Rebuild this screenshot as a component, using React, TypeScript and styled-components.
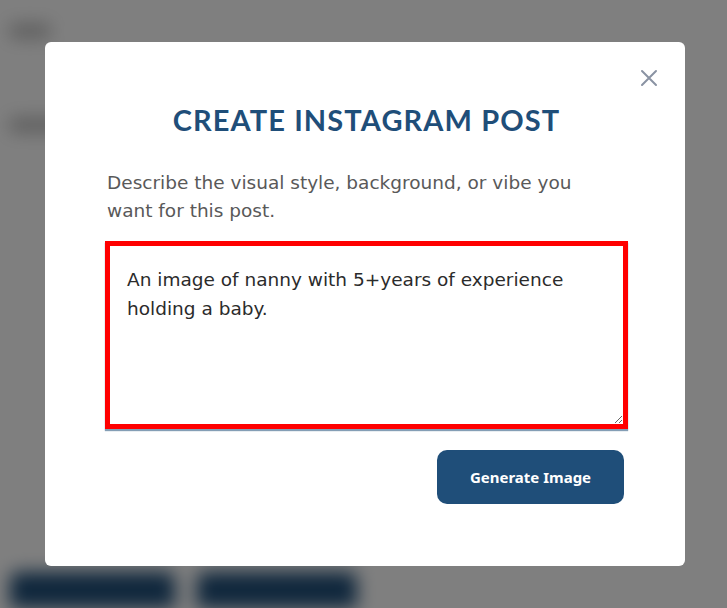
import { useEffect, useRef } from "react";
import styled, { createGlobalStyle } from "styled-components";

const GlobalStyle = createGlobalStyle`
  html, body {
    margin: 0;
    padding: 0;
    height: 100%;
    overflow: hidden;
  }
  body {
    font-family: "DejaVu Sans", "Noto Sans", sans-serif;
    background: #ffffff;
  }
`;

const TEXT = "An image of nanny with 5+years of experience holding a baby.";

export default function App() {
  const areaRef = useRef<HTMLTextAreaElement>(null);

  useEffect(() => {
    const el = areaRef.current;
    if (el) {
      el.focus();
      el.setSelectionRange(TEXT.length, TEXT.length);
    }
  }, []);

  return (
    <>
      <GlobalStyle />
      <StyledPage>
        <StyledPageTop>
          <StyledGhostLine $width={40} />
          <StyledGhostLine $width={70} />
        </StyledPageTop>
        <StyledPageActions>
          <StyledGhostButton $width={165} />
          <StyledGhostButton $width={160} />
        </StyledPageActions>
      </StyledPage>

      <StyledOverlay>
        <StyledModal role="dialog" aria-labelledby="post-title">
          <StyledCloseButton aria-label="Close">
            <svg width="18" height="18" viewBox="0 0 18 18" fill="none">
              <path d="M2 2L16 16M16 2L2 16" stroke="#8a93a3" strokeWidth="2" strokeLinecap="round" />
            </svg>
          </StyledCloseButton>
          <StyledTitle id="post-title">CREATE INSTAGRAM POST</StyledTitle>
          <StyledDescription>
            Describe the visual style, background, or vibe you want for this post.
          </StyledDescription>
          <StyledTextArea ref={areaRef} defaultValue={TEXT} />
          <StyledFooter>
            <StyledPrimaryButton>Generate Image</StyledPrimaryButton>
          </StyledFooter>
        </StyledModal>
      </StyledOverlay>
    </>
  );
}

const StyledPage = styled.div`
  height: 100vh;
  display: flex;
  flex-direction: column;
  justify-content: space-between;
  padding: 24px 10px 0;
  box-sizing: border-box;
  filter: blur(9px);
  overflow: hidden;
`;

const StyledPageTop = styled.div`
  display: flex;
  flex-direction: column;
  gap: 80px;
`;

const StyledGhostLine = styled.div<{ $width: number }>`
  width: ${(p) => p.$width}px;
  height: 14px;
  background: #333;
  opacity: 0.35;
`;

const StyledPageActions = styled.div`
  display: flex;
  gap: 22px;
  margin-bottom: -20px;
`;

const StyledGhostButton = styled.div<{ $width: number }>`
  width: ${(p) => p.$width}px;
  height: 56px;
  border-radius: 8px;
  background: #1f4e79;
`;

const StyledOverlay = styled.div`
  position: fixed;
  inset: 0;
  background: rgba(0, 0, 0, 0.5);
  display: flex;
  align-items: center;
  justify-content: center;
`;

const StyledModal = styled.div`
  position: relative;
  width: 640px;
  box-sizing: border-box;
  margin-left: 3px;
  padding: 61px 57px 62px 60px;
  background: #ffffff;
  border-radius: 6px;
  display: flex;
  flex-direction: column;
`;

const StyledCloseButton = styled.button`
  position: absolute;
  top: 23px;
  right: 23px;
  width: 26px;
  height: 26px;
  padding: 0;
  border: none;
  background: transparent;
  display: flex;
  align-items: center;
  justify-content: center;
  cursor: pointer;
`;

const StyledTitle = styled.h2`
  margin: 0 0 32px;
  text-align: center;
  font-family: "Lato", sans-serif;
  font-weight: 700;
  font-size: 29px;
  letter-spacing: 1.1px;
  line-height: 1.2;
  color: #1f4e79;
`;

const StyledDescription = styled.p`
  margin: 0 0 16px 2px;
  max-width: 490px;
  font-size: 18.5px;
  line-height: 28px;
  color: #595959;
`;

const StyledTextArea = styled.textarea`
  display: block;
  width: 100%;
  height: 188px;
  box-sizing: border-box;
  padding: 19px 17px;
  border: 5px solid #ff0000;
  border-radius: 0;
  outline: none;
  resize: vertical;
  box-shadow: 0 2px 1px rgba(31, 78, 121, 0.55);
  font-family: "DejaVu Sans", "Noto Sans", sans-serif;
  font-size: 18.5px;
  line-height: 29px;
  color: #2b2b2b;
  caret-color: #111;
`;

const StyledFooter = styled.div`
  display: flex;
  justify-content: flex-end;
  padding-top: 21px;
  padding-right: 4px;
`;

const StyledPrimaryButton = styled.button`
  width: 187px;
  height: 54px;
  border: none;
  border-radius: 10px;
  background: #1f4e79;
  color: #ffffff;
  font-family: "Noto Sans", sans-serif;
  font-weight: 700;
  font-size: 15px;
  cursor: pointer;
`;
